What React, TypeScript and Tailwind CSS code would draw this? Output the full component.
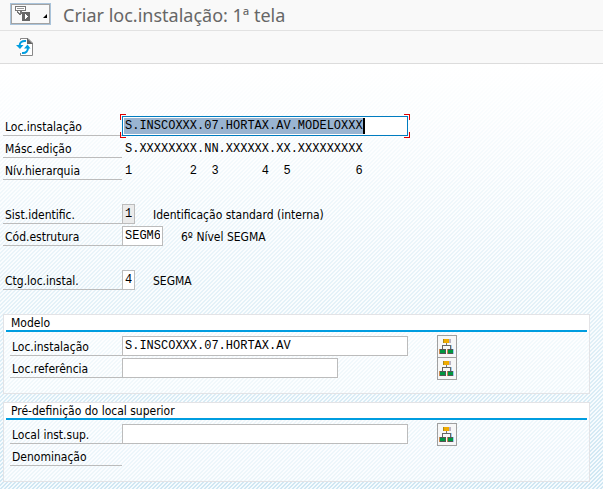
import type { ReactNode } from "react";

const labelFont = "font-['DejaVu_Sans_Condensed','Noto_Sans',sans-serif]";
const monoFont = "font-['Liberation_Mono',monospace]";
const stripes =
  "bg-[linear-gradient(to_bottom,#ffffff_0%,rgba(255,255,255,0)_100%),linear-gradient(135deg,#cfe7f3_25%,#f6fbfe_25%,#f6fbfe_50%,#cfe7f3_50%,#cfe7f3_75%,#f6fbfe_75%)] bg-[length:100%_100%,4px_4px]";

function MenuIcon() {
  return (
    <svg width="16" height="16" viewBox="0 0 16 16" fill="none" aria-hidden="true" shapeRendering="crispEdges">
      <path d="M0 0H11V5H0Z" fill="#777" />
      <path d="M1 1H10V4H1Z" fill="#fff" />
      <path d="M2 2H9V3H2Z" fill="#999" />
      <path d="M2 5H3V6H4V7H5V5H7V8H6V9H4V8H3V7H2Z" fill="#777" />
      <path d="M7 6H15V15H7Z" fill="#666" />
      <path d="M10 8V13H11V12H12V11H13V10H12V9H11V8Z" fill="#fff" />
    </svg>
  );
}

function RefreshPageIcon() {
  return (
    <svg width="18" height="18" viewBox="0 0 18 18" fill="none" aria-hidden="true">
      <path d="M4.500 2V0.500H12L16.500 5V17.500H4.500V15" fill="#fff" stroke="#888" />
      <path d="M11 0L17 6H11Z" fill="#666" />
      <path d="M10 3C6 2.500 3.500 4.500 3.500 8" stroke="#009de0" strokeWidth="2" />
      <path d="M0 7H7.500L4 11Z" fill="#009de0" />
      <path d="M6 15C10 15.500 12 13 12 9.500" stroke="#009de0" strokeWidth="2" />
      <path d="M8 10.500H14.500L11.500 6.500Z" fill="#009de0" />
    </svg>
  );
}

function HierarchyIcon() {
  return (
    <svg width="16" height="16" viewBox="0 0 16 16" fill="none" aria-hidden="true" shapeRendering="crispEdges" className="shrink-0">
      <path d="M5 0H11V4H5Z" fill="#f0ab00" />
      <path d="M4 0H5V4H4Z" fill="#a98a18" />
      <path d="M10 0H12V4H10Z" fill="#b9b3c4" />
      <path d="M7 4H8V6H7Z" fill="#777" />
      <path d="M3 6H12V7H3ZM3 7H4V10H3ZM11 7H12V10H11Z" fill="#666" />
      <path d="M12 6H13V10H12Z" fill="#9ccbf0" />
      <path d="M0 10H7V15H0ZM8 10H15V15H8Z" fill="#555" />
      <path d="M1 11H6V14H1ZM9 11H14V14H9Z" fill="#009640" />
      <path d="M0 10H1V15H0ZM8 10H9V15H8Z" fill="#c98a50" />
      <path d="M14 10H15V15H14Z" fill="#9ccbf0" />
    </svg>
  );
}

function HierarchyButton({ label }: { label: string }) {
  return (
    <button
      type="button"
      aria-label={label}
      className="-mb-px flex h-[23px] w-5 items-center justify-center border border-[#a0a0a0] bg-[#f7f7f7]"
    >
      <HierarchyIcon />
    </button>
  );
}

type RowProps = { label: string; htmlFor?: string; inset?: boolean; children?: ReactNode };

function Row({ label, htmlFor, inset, children }: RowProps) {
  const box = `shrink-0 border-b border-[#bcbcbc] pl-0.5 leading-[15px] ${inset ? "w-28" : "w-[119px]"}`;
  return (
    <div className="flex h-[22px] items-end">
      {htmlFor ? (
        <label htmlFor={htmlFor} className={box}>{label}</label>
      ) : (
        <span className={box}>{label}</span>
      )}
      {children}
    </div>
  );
}

type FieldProps = { id: string; value?: string; width: string; readOnly?: boolean };

function Field({ id, value = "", width, readOnly }: FieldProps) {
  return (
    <input
      id={id}
      defaultValue={value}
      readOnly={readOnly}
      className={`h-5 border border-[#bcbcbc] px-0.5 text-[12px] outline-none ${monoFont} ${width} ${
        readOnly ? "bg-[#ebebeb]" : "bg-white"
      }`}
    />
  );
}

function Group({ title, children }: { title: string; children: ReactNode }) {
  return (
    <section className="mr-[13px] ml-[3px] h-20 border border-[#e3e3e6] bg-white/60">
      <div className="bg-white px-0.5">
        <h2 className="h-[17px] border-b-2 border-[#009de0] pl-[5px] leading-[17px]">{title}</h2>
      </div>
      <div className="pt-0.5 pl-1.5">{children}</div>
    </section>
  );
}

function FocusCorners() {
  return (
    <span aria-hidden="true">
      <span className="absolute -top-0.5 -left-0.5 size-1.5 border-t border-l border-[#e00000]" />
      <span className="absolute -top-0.5 -right-0.5 size-1.5 border-t border-r border-[#e00000]" />
      <span className="absolute -bottom-0.5 -left-0.5 size-1.5 border-b border-l border-[#e00000]" />
      <span className="absolute -right-0.5 -bottom-0.5 size-1.5 border-r border-b border-[#e00000]" />
    </span>
  );
}

export default function App() {
  const monoValue = `pl-[3px] text-[12px] leading-[18px] whitespace-pre ${monoFont}`;
  return (
    <div className={`flex min-h-screen flex-col text-[12px] text-black ${labelFont}`}>
      <header className="flex h-[31px] items-start border-b border-[#e2e2e2] bg-[#f9f9f9] pt-[3px] pl-2.5">
        <button
          type="button"
          aria-label="Menu"
          className="flex h-[22px] w-[41px] items-center justify-between border border-[#a9c3da] bg-[#f9f9f9] pr-[3px] pl-1 inset-ring inset-ring-[#a3a3a3]"
        >
          <MenuIcon />
          <svg width="4" height="4" viewBox="0 0 4 4" aria-hidden="true" className="mt-1">
            <path d="M4 0V4H0Z" fill="#000" />
          </svg>
        </button>
        <h1 className="pl-3 font-['Noto_Sans',sans-serif] text-[18px] leading-6 text-[#666]">Criar loc.instalação: 1ª tela</h1>
      </header>
      <div className="flex h-[33px] items-center border-b border-[#dcdcdc] bg-[#f9f9f9] pl-4">
        <button type="button" aria-label="Atualizar">
          <RefreshPageIcon />
        </button>
      </div>
      <main className={`grow pt-[50px] pb-2 ${stripes}`}>
        <div className="pl-[3px]">
          <Row label="Loc.instalação" htmlFor="loc">
            <div className="relative">
              <input
                id="loc"
                defaultValue="S.INSCOXXX.07.HORTAX.AV.MODELOXXX"
                className={`block h-5 w-[286px] border border-[#007cc0] bg-white bg-[linear-gradient(to_right,#99b4d1_239px,#000_239px)] bg-[length:241px_16px] bg-[position:1px_1px] bg-no-repeat px-0.5 text-[12px] outline-none ${monoFont}`}
              />
              <FocusCorners />
            </div>
          </Row>
          <Row label="Másc.edição">
            <span className={monoValue}>S.XXXXXXXX.NN.XXXXXX.XX.XXXXXXXXX</span>
          </Row>
          <Row label="Nív.hierarquia">
            <span className={monoValue}>{"1        2  3      4  5         6"}</span>
          </Row>
        </div>
        <div className="pt-[22px] pl-[3px]">
          <Row label="Sist.identific." htmlFor="sist">
            <Field id="sist" value="1" width="w-[13px]" readOnly />
            <span className="pl-[18px] leading-[18px]">Identificação standard (interna)</span>
          </Row>
          <Row label="Cód.estrutura" htmlFor="cod">
            <Field id="cod" value="SEGM6" width="w-[41px]" />
            <span className="pl-[18px] leading-[18px]">6º Nível SEGMA</span>
          </Row>
        </div>
        <div className="pt-[22px] pb-6 pl-[3px]">
          <Row label="Ctg.loc.instal." htmlFor="ctg">
            <Field id="ctg" value="4" width="w-[13px]" />
            <span className="pl-[18px] leading-[18px]">SEGMA</span>
          </Row>
        </div>
        <div className="flex flex-col gap-2">
          <Group title="Modelo">
            <div className="flex">
              <div className="w-[427px]">
                <Row label="Loc.instalação" htmlFor="modelo-loc" inset>
                  <Field id="modelo-loc" value="S.INSCOXXX.07.HORTAX.AV" width="w-[286px]" />
                </Row>
                <Row label="Loc.referência" htmlFor="modelo-ref" inset>
                  <Field id="modelo-ref" width="w-[216px]" />
                </Row>
              </div>
              <div className="pt-px">
                <HierarchyButton label="Estrutura da localização" />
                <HierarchyButton label="Estrutura de referência" />
              </div>
            </div>
          </Group>
          <Group title="Pré-definição do local superior">
            <div className="flex">
              <div className="w-[427px]">
                <Row label="Local inst.sup." htmlFor="sup" inset>
                  <Field id="sup" width="w-[286px]" />
                </Row>
                <Row label="Denominação" inset />
              </div>
              <div className="pt-px">
                <HierarchyButton label="Estrutura do local superior" />
              </div>
            </div>
          </Group>
        </div>
      </main>
    </div>
  );
}
